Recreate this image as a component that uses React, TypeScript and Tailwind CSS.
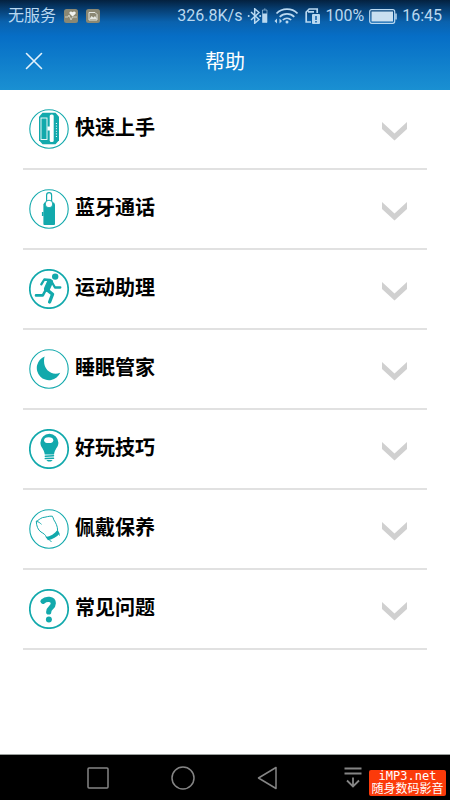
import type { ReactNode } from "react";

const TEAL = "#12a9ac";

function BandIcon() {
  return (
    <>
      <path d="M13.5 3.8h13l3.5 4v23.4l-3.5 4h-13l-3.5-4V7.8z" fill={TEAL} />
      <rect x="12" y="9" width="6" height="21.5" fill="none" stroke="#fff" strokeWidth="0.9" />
      <rect x="20.7" y="5.5" width="4" height="27.5" rx="1.6" fill="#fff" />
      <rect x="18.5" y="17.5" width="2.5" height="4" fill="#fff" />
      <path d="M27.4 14v14" stroke="#fff" strokeWidth="1" strokeDasharray="1 1.6" />
    </>
  );
}

function HeadsetIcon() {
  return (
    <>
      <path d="M17.6 13V6.2a2.5 2.5 0 0 1 5 0V13" fill="#fff" stroke={TEAL} strokeWidth="1.2" />
      <path d="M15.400 13.500h9.600l1 2V35a1 1 0 0 1-1 1h-9.600a1 1 0 0 1-1-1V15.500z" fill={TEAL} />
      <path d="M13.700 23v4" stroke={TEAL} strokeWidth="1.600" />
      <circle cx="20" cy="15" r="3.800" fill="#fff" stroke={TEAL} strokeWidth="1" />
    </>
  );
}

function RunnerIcon() {
  return (
    <>
      <circle cx="26.2" cy="7.600" r="3.200" fill={TEAL} />
      <g fill="none" stroke={TEAL} strokeLinecap="round" strokeLinejoin="round">
        <path d="M12.300 15.300l3-4.800 5.700.5" strokeWidth="2.300" />
        <path d="M22.500 12.500l3.500 6h5.300" strokeWidth="2.300" />
        <path d="M21 13l-3 6.800" strokeWidth="6" />
        <path d="M16.700 21l-2.900 5.400H7" strokeWidth="2.600" />
        <path d="M17.800 20.600l5.800 4.600-3 7.800" strokeWidth="3.300" />
      </g>
    </>
  );
}

function MoonIcon() {
  return <path d="M15.600 7.600A12.200 12.200 0 1 0 31.200 23.800C22 27.500 12.500 19.500 15.600 7.600z" fill={TEAL} />;
}

function BulbIcon() {
  return (
    <>
      <path d="M20.400 4.800a9 9 0 0 1 9 9c0 4.400-3.600 6-4.400 11.600h-9.200c-.8-5.600-4.400-7.200-4.400-11.600a9 9 0 0 1 9-9z" fill={TEAL} />
      <ellipse cx="19.700" cy="11.200" rx="4.600" ry="2.900" fill="#fff" />
      <path d="M16.300 27.200l8.200-.4M16.300 29.600l8.200-.4" stroke={TEAL} strokeWidth="1.500" strokeLinecap="round" />
      <path d="M17.300 31h6.400L22 32.600h-3z" fill={TEAL} />
    </>
  );
}

function HandIcon() {
  return (
    <>
      <path
        d="M17.500 28.500c-1-3-3-4-5.500-5.500-3-2-4.600-6-4.700-10.800 2-.7 3.700-2.700 6.200-3.600 3.200-.3 6.600-1.800 9.800-1.400 1 1 .9 2.400 1.500 3.600 2 3 3.800 6.400 3.800 10.500M7.300 12.400c2.500.2 3.800 1.800 5.200 2.900"
        fill="none"
        stroke={TEAL}
        strokeWidth="1"
        strokeLinejoin="round"
      />
      <path d="M16.600 28c5-.5 9-3 12-7.200l2 3.800c-3 3.600-6.600 5.600-11.600 6.600z" fill={TEAL} />
      <path d="M20 30.500l2.500 2.500M29.500 24l1 2.500" stroke={TEAL} strokeWidth="1" />
    </>
  );
}

function QuestionIcon() {
  return (
    <>
      <path
        d="M14 12.300c3.200-3 10.300-2.800 10.300 2 0 4.500-4.600 4.200-4.600 8.700"
        fill="none"
        stroke={TEAL}
        strokeWidth="5.200"
        strokeLinecap="round"
      />
      <circle cx="19.900" cy="30.400" r="3" fill={TEAL} />
    </>
  );
}

const topics: { title: string; icon: ReactNode; ring: number }[] = [
  { title: "快速上手", icon: <BandIcon />, ring: 1.1 },
  { title: "蓝牙通话", icon: <HeadsetIcon />, ring: 1.1 },
  { title: "运动助理", icon: <RunnerIcon />, ring: 1.7 },
  { title: "睡眠管家", icon: <MoonIcon />, ring: 1.1 },
  { title: "好玩技巧", icon: <BulbIcon />, ring: 1.7 },
  { title: "佩戴保养", icon: <HandIcon />, ring: 1.1 },
  { title: "常见问题", icon: <QuestionIcon />, ring: 1.7 },
];

function StatusBar() {
  return (
    <div className="flex h-8 items-center justify-between px-2 text-base leading-5 text-[#b9d8f0]">
      <div className="flex items-center gap-2">
        <span>无服务</span>
        <svg className="size-3.5" viewBox="0 0 14 14" aria-hidden="true">
          <rect width="14" height="14" rx="2.500" fill="#8b8873" />
          <path d="M8.500 7.500L5.700 4.800C4.500 3 7 1.500 8.500 3.300 10 1.500 12.800 3 11.400 4.900z" fill="#f1f3ef" />
          <path d="M1 8h3l1-2 2 5 1.500-3H13" fill="none" stroke="#d5d5c8" strokeWidth="0.900" />
        </svg>
        <svg className="size-3.5" viewBox="0 0 14 14" aria-hidden="true">
          <rect width="14" height="14" rx="2.500" fill="#8b8873" />
          <path d="M3 3.500h6l2 2V11H3z" fill="none" stroke="#e5e8e2" />
          <path d="M3.500 10l2-3 2 1.500L9 7l2 3z" fill="#e5e8e2" />
        </svg>
      </div>
      <div className="flex items-center gap-[5px]">
        <span>326.8K/s</span>
        <svg className="h-4 w-[22px]" viewBox="0 0 22 16" fill="none" stroke="currentColor" aria-hidden="true">
          <path d="M4 4l8 7.500-4.300 3.700V.8L12 4.500 4 12" strokeWidth="1.500" />
          <circle cx="1.700" cy="8" r="1" fill="currentColor" stroke="none" />
          <circle cx="13.200" cy="8" r="1" fill="currentColor" stroke="none" />
          <path d="M15.500 2h4.500v12.500h-4.500zM17 1h1.500" opacity="0.600" />
          <path d="M15.500 5.500h4.500v9h-4.500z" fill="currentColor" stroke="none" />
        </svg>
        <svg className="mr-0.5 h-4 w-6" viewBox="0 0 24 16" fill="none" stroke="currentColor" strokeWidth="1.700" aria-hidden="true">
          <path d="M2.500 5.500c5.600-5.800 15.400-5.800 21 0M5.700 8.800c4-4 10.600-4 14.600 0M8.800 12c2.400-2.300 6-2.300 8.400 0" />
          <circle cx="13" cy="14" r="1.500" fill="currentColor" stroke="none" />
          <path d="M3 10.500v5l-2.500-2.500zM5.500 10.500v5L8 13z" fill="currentColor" stroke="none" />
        </svg>
        <svg className="h-4 w-[15px]" viewBox="0 0 15 16" fill="none" stroke="currentColor" aria-hidden="true">
          <path d="M6 14H1.200V4l3-3h8v4M3 3.800h6" strokeWidth="1.700" />
          <rect x="7" y="6" width="8" height="10" rx="1" fill="currentColor" stroke="none" />
          <path d="M11 8v4M11 13v1.500" stroke="#0d5ca6" strokeWidth="1.500" />
        </svg>
        <span>100%</span>
        <svg className="h-[15px] w-7" viewBox="0 0 28 15" aria-hidden="true">
          <rect x="0.700" y="0.700" width="25" height="13.600" rx="2" fill="none" stroke="currentColor" strokeWidth="1.200" />
          <rect x="2.500" y="2.500" width="21.500" height="10" fill="#c9dff0" />
          <path d="M27 4.500v6" stroke="currentColor" strokeWidth="1.500" />
        </svg>
        <span>16:45</span>
      </div>
    </div>
  );
}

export default function App() {
  return (
    <div className="flex min-h-screen flex-col bg-white font-[Roboto,'Noto_Sans_CJK_SC',sans-serif]">
      <header className="bg-[linear-gradient(to_bottom,#04213f_0px,#063a6b_8px,#0a62ae_22px,#066ec6_36px,#1a90d2_90px)]">
        <StatusBar />
        <div className="grid h-[58px] grid-cols-[1fr_auto_1fr] items-center px-6">
          <button type="button" aria-label="关闭" className="flex size-5 items-center justify-center text-[#e4f2fb]">
            <svg className="size-[18px]" viewBox="0 0 18 18" fill="none" stroke="currentColor" strokeWidth="1.600" strokeLinecap="round">
              <path d="M1.500 1.500l15 15M16.500 1.500l-15 15" />
            </svg>
          </button>
          <h1 className="pt-0.5 text-xl text-white">帮助</h1>
        </div>
      </header>

      <main className="flex-1 px-[23px]">
        <ul>
          {topics.map((topic) => (
            <li key={topic.title} className="border-b-2 border-[#e1e1e1]">
              <button type="button" aria-expanded="false" className="flex h-[78px] w-full items-center pr-5 pl-1.5 text-left">
                <svg className="size-10 shrink-0" viewBox="0 0 40 40" aria-hidden="true">
                  <circle cx="20" cy="20" r="19.200" fill="#fff" stroke={TEAL} strokeWidth={topic.ring} />
                  {topic.icon}
                </svg>
                <span className="ml-1.5 flex-1 pb-0.5 text-xl font-bold text-black">{topic.title}</span>
                <svg className="mt-1 h-5 w-[25px]" viewBox="0 0 25 20" aria-hidden="true">
                  <path d="M0 1l12.500 11.500L25 1v7L12.500 19.500 0 8z" fill="#d0d0d0" />
                </svg>
              </button>
            </li>
          ))}
        </ul>
      </main>

      <nav className="relative grid h-[46px] grid-cols-4 items-center justify-items-center border-t border-[#9a9f9c] bg-black px-[55px] text-[#858585]">
        <button type="button" aria-label="最近任务">
          <svg className="size-6" viewBox="0 0 24 24" fill="none" stroke="currentColor" strokeWidth="1.500">
            <rect x="2" y="2" width="20" height="20" rx="1" />
          </svg>
        </button>
        <button type="button" aria-label="主页">
          <svg className="size-6" viewBox="0 0 24 24" fill="none" stroke="currentColor" strokeWidth="1.500">
            <circle cx="12" cy="12" r="11" />
          </svg>
        </button>
        <button type="button" aria-label="返回">
          <svg className="size-6" viewBox="0 0 24 24" fill="none" stroke="currentColor" strokeWidth="1.500" strokeLinejoin="round">
            <path d="M2.500 12L20 1.500v21z" />
          </svg>
        </button>
        <button type="button" aria-label="隐藏导航栏">
          <svg className="size-6" viewBox="0 0 24 24" fill="none" stroke="currentColor" strokeWidth="1.800">
            <path d="M3.500 2.500h17M3.500 7.500h17M12 11.500v9M6 14.500l6 6 6-6" />
          </svg>
        </button>
        <div className="absolute right-1 bottom-1 flex h-[26px] w-[77px] flex-col items-center justify-center rounded-xs bg-[#fb3a0a] text-white">
          <span className="font-['DejaVu_Sans_Mono',monospace] text-xs leading-[13px]">iMP3.net</span>
          <span className="text-xs leading-[13px] whitespace-nowrap">随身数码影音</span>
        </div>
      </nav>
    </div>
  );
}
